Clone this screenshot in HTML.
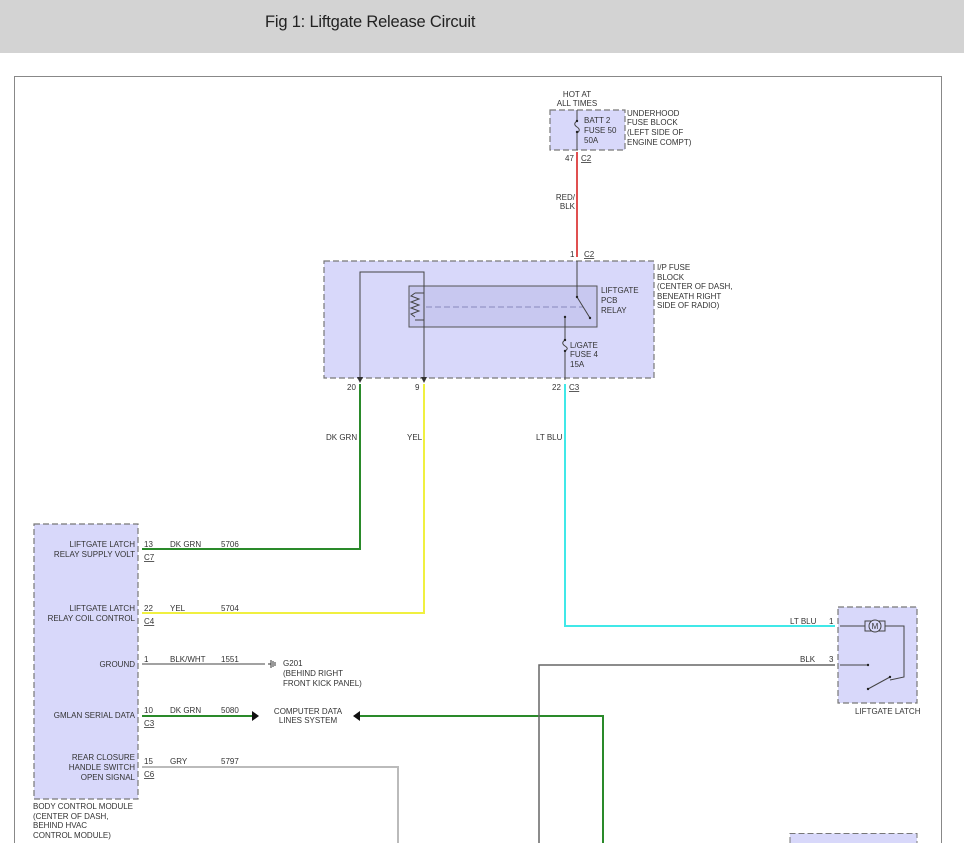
<!DOCTYPE html>
<html><head><meta charset="utf-8"><style>
html,body{margin:0;padding:0;background:#fff;width:964px;height:866px;overflow:hidden}
.hdr{position:absolute;left:0;top:0;width:964px;height:53px;background:#d3d3d3}
.hdr span{position:absolute;left:265px;top:13px;font:16.5px "Liberation Sans",sans-serif;color:#222;letter-spacing:-0.2px}
svg{position:absolute;left:0;top:0}
text{font-family:"Liberation Sans",sans-serif;font-size:8px;fill:#333}
.box{fill:#d8d8fa;stroke:#777;stroke-width:1.2;stroke-dasharray:6 3}
.w{fill:none;stroke:#444;stroke-width:1}
</style></head><body>
<div class="hdr"><span>Fig 1: Liftgate Release Circuit</span></div>
<svg width="964" height="866" viewBox="0 0 964 866">
<defs><marker id="a" markerWidth="6" markerHeight="6" refX="5" refY="3" orient="auto"><path d="M0,0L6,3L0,6z" fill="#333"/></marker></defs>
<path d="M14.5,843 V76.5 H941.5 V843" fill="none" stroke="#888" stroke-width="1"/>
<rect class="box" x="550" y="110" width="75" height="40"/>
<text x="577" y="97" text-anchor="middle">HOT AT</text>
<text x="577" y="106" text-anchor="middle">ALL TIMES</text>
<text x="627" y="116">UNDERHOOD</text><text x="627" y="125">FUSE BLOCK</text><text x="627" y="135">(LEFT SIDE OF</text><text x="627" y="145">ENGINE COMPT)</text>
<text x="584" y="123">BATT 2</text><text x="584" y="133">FUSE 50</text><text x="584" y="143">50A</text>
<path class="w" d="M577,110V121M577,132V150" /><path class="w" d="M577,121c-3,2 -3,4 0,6c3,2 3,4 0,6"/>
<circle cx="577" cy="121" r="1.2" fill="#222"/><circle cx="577" cy="132" r="1.2" fill="#222"/>
<text x="565" y="161">47</text><text x="581" y="161" text-decoration="underline">C2</text>
<path d="M577,152V257" stroke="#e05050" stroke-width="2"/>
<text x="575" y="200" text-anchor="end">RED/</text><text x="575" y="209" text-anchor="end">BLK</text>
<text x="570" y="257">1</text><text x="584" y="257" text-decoration="underline">C2</text>
<rect class="box" x="324" y="261" width="330" height="117"/>
<text x="657" y="270">I/P FUSE</text><text x="657" y="280">BLOCK</text><text x="657" y="289">(CENTER OF DASH,</text><text x="657" y="299">BENEATH RIGHT</text><text x="657" y="308">SIDE OF RADIO)</text>
<rect x="409" y="286" width="188" height="41" fill="#c8c8f0" stroke="#555" stroke-width="1"/>
<text x="601" y="293">LIFTGATE</text><text x="601" y="303">PCB</text><text x="601" y="313">RELAY</text>
<path class="w" d="M360,382V272H424V382" marker-end="url(#a)"/>
<path class="w" d="M360,272V382" marker-end="url(#a)"/>
<path d="M415,293h9M415,320h9M415,293l-4,3 8,3 -8,3 8,3 -8,3 8,3 -8,3 4,3" fill="none" stroke="#444"/>
<path d="M426,307H583" stroke="#8888bb" stroke-dasharray="6 3"/>
<path class="w" d="M577,261V297L590,318"/>
<circle cx="577" cy="297" r="1.2" fill="#222"/><circle cx="590" cy="318" r="1.2" fill="#222"/>
<path class="w" d="M565,317V340M565,351V380"/><path class="w" d="M565,340c-3,2 -3,4 0,6c3,2 3,3 0,5"/>
<circle cx="565" cy="317" r="1.2" fill="#222"/><circle cx="565" cy="340" r="1.2" fill="#222"/><circle cx="565" cy="351" r="1.2" fill="#222"/>
<text x="570" y="348">L/GATE</text><text x="570" y="357">FUSE 4</text><text x="570" y="367">15A</text>
<text x="347" y="390">20</text><text x="415" y="390">9</text><text x="552" y="390">22</text><text x="569" y="390" text-decoration="underline">C3</text>
<path d="M360,384V549H142" fill="none" stroke="#2a8a2a" stroke-width="2"/>
<path d="M424,384V613H142" fill="none" stroke="#f0f040" stroke-width="2"/>
<path d="M565,384V626H835" fill="none" stroke="#40e8e8" stroke-width="2"/>
<text x="326" y="440">DK GRN</text><text x="407" y="440">YEL</text><text x="536" y="440">LT BLU</text>
<rect class="box" x="34" y="524" width="104" height="275"/>
<g text-anchor="end"><text x="135" y="547">LIFTGATE LATCH</text><text x="135" y="557">RELAY SUPPLY VOLT</text>
<text x="135" y="611">LIFTGATE LATCH</text><text x="135" y="621">RELAY COIL CONTROL</text>
<text x="135" y="667">GROUND</text><text x="135" y="718">GMLAN SERIAL DATA</text>
<text x="135" y="760">REAR CLOSURE</text><text x="135" y="770">HANDLE SWITCH</text><text x="135" y="780">OPEN SIGNAL</text></g>
<text x="33" y="809">BODY CONTROL MODULE</text><text x="33" y="819">(CENTER OF DASH,</text><text x="33" y="828">BEHIND HVAC</text><text x="33" y="838">CONTROL MODULE)</text>
<text x="144" y="547">13</text><text x="144" y="560" text-decoration="underline">C7</text><text x="170" y="547">DK GRN</text><text x="221" y="547">5706</text>
<text x="144" y="611">22</text><text x="144" y="624" text-decoration="underline">C4</text><text x="170" y="611">YEL</text><text x="221" y="611">5704</text>
<text x="144" y="662">1</text><text x="170" y="662">BLK/WHT</text><text x="221" y="662">1551</text>
<path class="w" d="M142,664H265"/><path d="M268,664h3M271,660v8M273,661v6M275,662v4" stroke="#333" fill="none"/>
<text x="283" y="666">G201</text><text x="283" y="676">(BEHIND RIGHT</text><text x="283" y="686">FRONT KICK PANEL)</text>
<text x="144" y="713">10</text><text x="144" y="726" text-decoration="underline">C3</text><text x="170" y="713">DK GRN</text><text x="221" y="713">5080</text>
<path d="M142,716H252" stroke="#2a8a2a" stroke-width="2"/><path d="M252,711L259,716L252,721z" fill="#111"/>
<text x="308" y="714" text-anchor="middle">COMPUTER DATA</text><text x="308" y="723" text-anchor="middle">LINES SYSTEM</text>
<path d="M360,716H603V843" fill="none" stroke="#2a8a2a" stroke-width="2"/><path d="M360,711L353,716L360,721z" fill="#111"/>
<text x="144" y="764">15</text><text x="144" y="777" text-decoration="underline">C6</text><text x="170" y="764">GRY</text><text x="221" y="764">5797</text>
<path d="M142,767H398V843" fill="none" stroke="#bbb" stroke-width="2"/>
<path d="M539,843V665H835" fill="none" stroke="#666" stroke-width="1.5"/>
<rect class="box" x="838" y="607" width="79" height="96"/>
<text x="790" y="624">LT BLU</text><text x="829" y="624">1</text>
<text x="800" y="662">BLK</text><text x="829" y="662">3</text>
<path class="w" d="M840,626H865M885,626H904V677L890,680M840,665H868"/>
<rect x="865" y="621" width="20" height="10" fill="#d8d8fa" stroke="#444"/><circle cx="875" cy="626" r="6" fill="#d8d8fa" stroke="#444"/>
<text x="875" y="629" text-anchor="middle" font-size="8">M</text>
<path class="w" d="M868,689L890,677"/><circle cx="868" cy="665" r="1.2" fill="#222"/><circle cx="868" cy="689" r="1.2" fill="#222"/><circle cx="890" cy="677" r="1.2" fill="#222"/>
<text x="855" y="714">LIFTGATE LATCH</text>
<path d="M790,843V833.5H917V843" fill="#d8d8fa" stroke="#777" stroke-dasharray="6 3"/>
</svg>
</body></html>
